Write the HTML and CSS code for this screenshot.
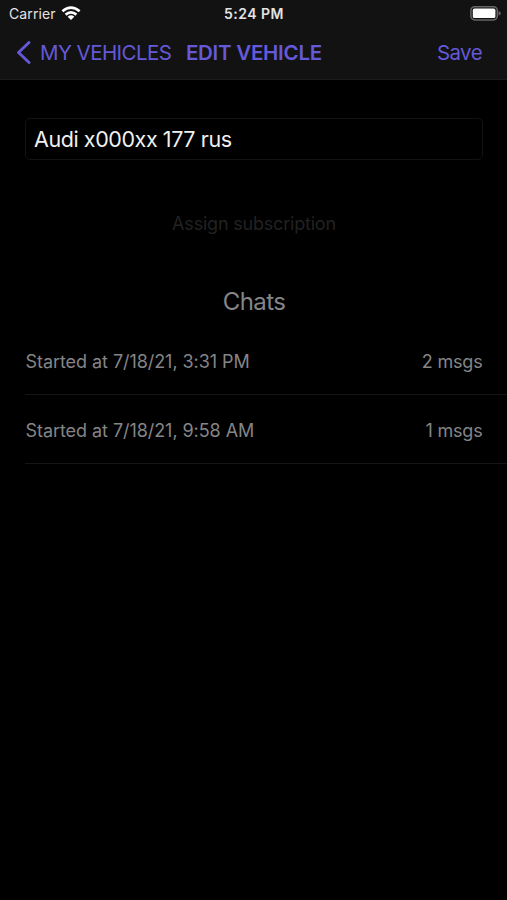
FILE: index.html
```html
<!DOCTYPE html>
<html lang="en">
<head>
<meta charset="utf-8">
<title>Edit Vehicle</title>
<link rel="stylesheet" href="styles.css">
</head>
<body>
<header class="top">
  <div class="status">
    <div class="carrier"><span class="carrier-name">Carrier</span>
      <svg class="wifi" width="20" height="15" viewBox="0 0 20 15" fill="none" stroke="#fff" stroke-width="2.7"><path d="M1.4 5.2Q10 -2.1 18.6 5.2M4.6 8.6Q10 4.2 15.4 8.6"/><path d="M10 14L6.7 10.7Q10 8 13.3 10.7Z" fill="#fff" stroke="none"/></svg>
    </div>
    <span class="time">5:24 PM</span>
    <svg class="battery" width="31" height="15" viewBox="0 0 31 15"><rect x=".9" y=".7" width="26.4" height="13.2" rx="3.8" fill="none" stroke="#666" stroke-width="1.5"/><rect x="2.8" y="2.6" width="22.6" height="9.4" rx="1.6" fill="#fff"/><path d="M28.5 5Q30.8 5.7 30.8 7.3T28.5 9.6Z" fill="#666"/></svg>
  </div>
  <nav class="nav">
    <a class="back"><svg class="chevron" width="15" height="24" viewBox="0 0 15 24" fill="none" stroke="#6459d8" stroke-width="2.9" stroke-linecap="round" stroke-linejoin="round"><path d="M13 1.5L2.5 11.5L13 21.5"/></svg><span class="back-label">MY VEHICLES</span></a>
    <h1 class="title">EDIT VEHICLE</h1>
    <a class="save">Save</a>
  </nav>
</header>
<main class="content">
  <div class="field"><span class="field-text">Audi x000xx 177 rus</span></div>
  <div class="assign"><span class="assign-text">Assign subscription</span></div>
  <h2 class="heading"><span class="heading-text">Chats</span></h2>
  <ul class="chats">
    <li class="chat"><span class="started">Started at 7/18/21, 3:31 PM</span><span class="count">2 msgs</span></li>
    <li class="chat"><span class="started">Started at 7/18/21, 9:58 AM</span><span class="count">1 msgs</span></li>
  </ul>
</main>
</body>
</html>
```
FILE: styles.css
```css
* { box-sizing: border-box; }
body { margin: 0; min-height: 900px; background: #000; color: #858587; font-family: Inter, "Liberation Sans", sans-serif; white-space: nowrap; }
h1, h2, ul { margin: 0; padding: 0; font-weight: 400; list-style: none; }
svg { display: block; flex: none; }
.top { height: 80px; background: #121212; border-bottom: 1px solid #1b1b1b; }
.status { height: 27px; padding: 0 6px 0 9px; display: grid; grid-template-columns: 1fr auto 1fr; align-items: center; color: #e4e4e4; font-size: 14px; }
.carrier { display: flex; align-items: center; gap: 5px; }
.carrier-name { letter-spacing: .1px; }
.time { margin-left: -2px; font-weight: 600; letter-spacing: .5px; }
.battery { justify-self: end; }
.nav { height: 52px; padding: 0 25px 0 16px; display: flex; align-items: center; color: #6459d8; font-size: 20.5px; line-height: 26px; }
.back { display: flex; align-items: center; gap: 9px; }
.back-label { letter-spacing: -.55px; }
.title { margin-left: 14.5px; font-size: 20.5px; font-weight: 600; letter-spacing: -.25px; }
.save { margin-left: auto; letter-spacing: -.6px; }
.content { padding: 38px 0 0 25px; }
.field { height: 42px; margin-right: 24px; padding: 0 8px; border: 1px solid #131313; border-radius: 5px; display: flex; align-items: center; color: #f0f0f0; font-size: 21.5px; }
.field-text { letter-spacing: -.42px; }
.assign { margin: 48px 24px 0 0; height: 32px; line-height: 32px; text-align: center; color: #222; font-size: 18px; letter-spacing: -.2px; }
.heading { margin: 44px 24px 0 0; height: 36px; line-height: 36px; text-align: center; font-size: 24px; letter-spacing: -.6px; }
.chats { padding-top: 6px; }
.chat { height: 69px; padding: 2px 24.5px 0 .5px; display: flex; justify-content: space-between; align-items: center; border-bottom: 1px solid #151515; font-size: 18px; letter-spacing: -.06px; }
.count { letter-spacing: -.2px; }
```
